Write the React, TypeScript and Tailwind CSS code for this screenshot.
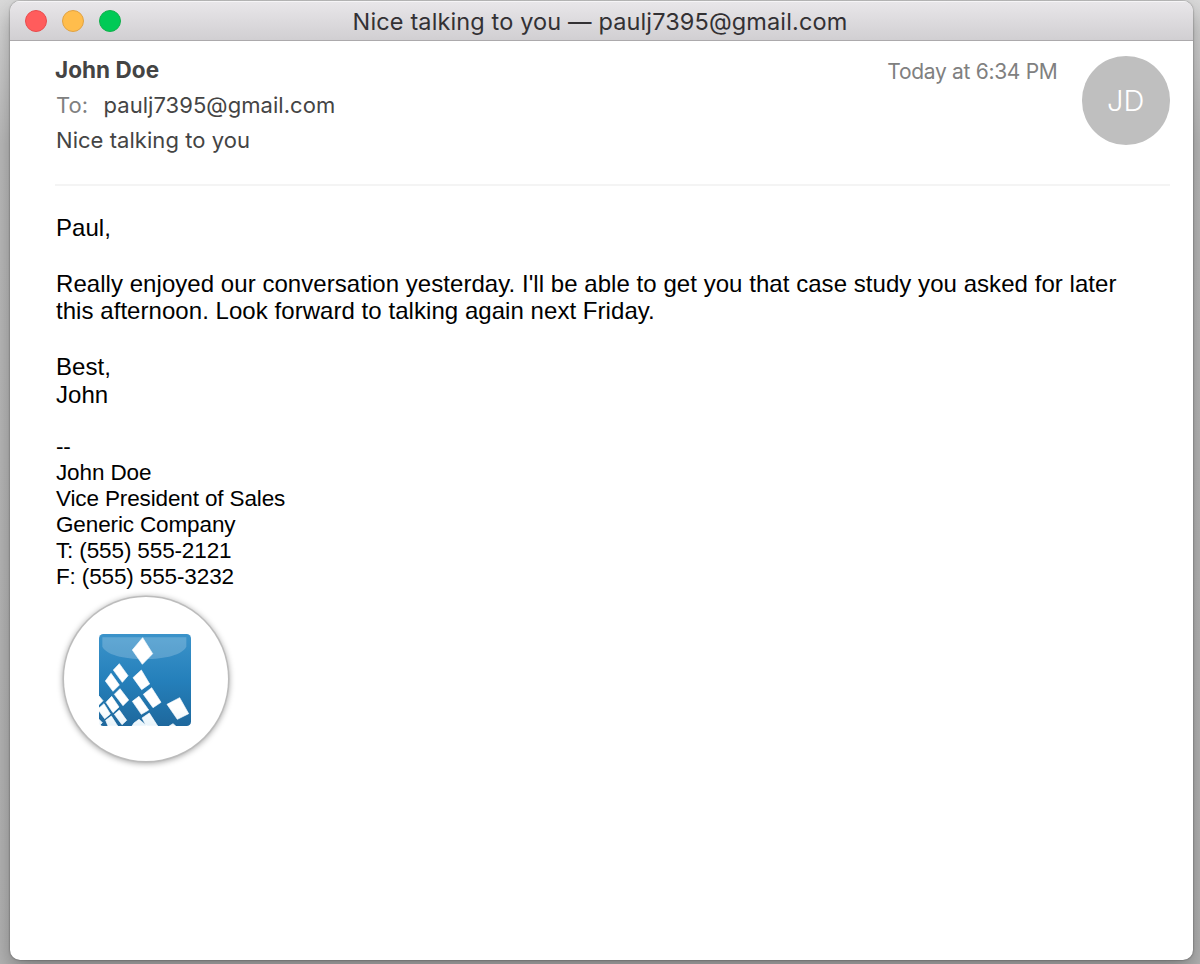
const email = 'paulj7395@gmail.com'

const signature = [
  'John Doe',
  'Vice President of Sales',
  'Generic Company',
  'T: (555) 555-2121',
  'F: (555) 555-3232',
]

const tiles = [
  '131,11 161,59 130,91 100,48',
  '61,89 87,125 70,145 43,108',
  '36,118 61,153 42,172 19,141',
  '127,108 152,150 128,167 102,131',
  '63,164 89,198 72,215 46,181',
  '158,161 186,205 162,221 133,181',
  '38,187 60,219 42,236 21,205',
  '120,187 149,228 127,241 100,202',
  '242,191 269,239 235,256 204,211',
  '15,209 34,240 17,254 0,231 0,222',
  '0,186 12,200 0,212',
  '61,228 83,259 69,272 46,241',
  '37,246 56,276 27,276 20,259',
  '151,237 176,276 142,276 129,252',
  '120,256 144,276 99,276 105,267',
  '222,269 230,276 211,276',
  '0,256 10,266 3,273 0,270',
]

function CompanyLogo() {
  return (
    <svg viewBox="0 0 276 276" className="w-[92px] h-[92px]">
      <defs>
        <linearGradient id="logo-bg" x1="0" y1="0" x2="0" y2="1">
          <stop offset="0" stopColor="#3b93ca" />
          <stop offset="0.5" stopColor="#2580bb" />
          <stop offset="1" stopColor="#1e689d" />
        </linearGradient>
        <linearGradient id="logo-tile" x1="0" y1="0" x2="0" y2="276" gradientUnits="userSpaceOnUse">
          <stop offset="0.8" stopColor="#ffffff" />
          <stop offset="1" stopColor="#e8f4fb" />
        </linearGradient>
        <clipPath id="logo-clip">
          <rect width="276" height="276" rx="13" />
        </clipPath>
      </defs>
      <g clipPath="url(#logo-clip)">
        <rect width="276" height="276" fill="url(#logo-bg)" />
        <path d="M10 10H262V38C250 62 200 75 136 75S22 62 10 38Z" fill="#ffffff" fillOpacity="0.2" />
      </g>
      {tiles.map(points => (
        <polygon
          key={points}
          points={points}
          fill="url(#logo-tile)"
          stroke="#ffffff"
          strokeWidth="2"
          strokeLinejoin="round"
        />
      ))}
    </svg>
  )
}

export default function App() {
  return (
    <div className="h-[964px] w-[1200px] overflow-hidden pt-px pl-[10px] bg-linear-to-b from-[#dadada] via-[#bcbcbc] via-15% to-[#b4b4b4] font-['Inter',sans-serif]">
      <div className="flex flex-col w-[1183px] h-[959px] rounded-[10px] overflow-hidden bg-white shadow-[0_0_2px_rgba(0,0,0,0.5),0_10px_22px_rgba(0,0,0,0.3)]">

        {/* Title bar */}
        <div className="relative flex items-center justify-center h-10 shrink-0 border-b border-[#acaaac] bg-linear-to-b from-[#e9e7ea] to-[#d1cfd2] shadow-[inset_0_1px_0_#f6f5f7]">
          <div className="absolute left-[14.5px] top-[9px] flex gap-[15px]">
            <span className="size-[22px] rounded-full bg-[#ff5c5c] border border-[#e84b4d]" />
            <span className="size-[22px] rounded-full bg-[#ffbd4c] border border-[#e0a243]" />
            <span className="size-[22px] rounded-full bg-[#00ca56] border border-[#12b04c]" />
          </div>
          <h1 className="pt-[2px] pr-[3px] text-[23.5px] tracking-[0.13px] leading-7 text-[#333134] whitespace-nowrap">
            Nice talking to you — {email}
          </h1>
        </div>

        {/* Message header */}
        <header className="flex ml-[45px] mr-[23px] h-[145px] shrink-0 border-b-2 border-[#f4f4f4] text-[22px] leading-[35px] tracking-[0.05px] text-[#444]">
          <div className="flex-1 pt-3">
            <div className="font-bold text-[22.5px] -mt-px mb-px">John Doe</div>
            <div className="pl-px">
              <span className="inline-block w-[47.5px] text-[#808080]">To:</span>
              {email}
            </div>
            <div className="pl-px">Nice talking to you</div>
          </div>
          <time className="pt-[13px] mr-6 text-[21px] tracking-[-0.3px] text-[#808080]">Today at 6:34 PM</time>
          <div className="mt-[15px] size-[88.5px] rounded-full bg-[#bfbfbf] flex items-center justify-center text-[29px] font-light text-white">
            JD
          </div>
        </header>

        {/* Message body */}
        <main className="pt-7 pl-[46px] font-['Liberation_Sans',sans-serif] text-[24px] leading-[27.8px] tracking-[0.05px] text-black">
          <p>Paul,</p>
          <p className="mt-[27.8px] whitespace-nowrap">
            Really enjoyed our conversation yesterday. I'll be able to get you that case study you asked for later
            <br />
            this afternoon. Look forward to talking again next Friday.
          </p>
          <p className="mt-[27.8px]">Best,<br />John</p>

          <div className="mt-[25px] text-[22.5px] leading-[26px] tracking-[-0.13px]">
            <p>--</p>
            {signature.map(line => <p key={line}>{line}</p>)}
          </div>

          <div className="mt-[7.5px] ml-[7.5px] size-[164px] rounded-full bg-white flex items-center justify-center pt-px pr-[2px] shadow-[0_0_0_1.5px_#bcbcbc,0_1px_6px_1px_rgba(0,0,0,0.4)]">
            <CompanyLogo />
          </div>
        </main>
      </div>
    </div>
  )
}
